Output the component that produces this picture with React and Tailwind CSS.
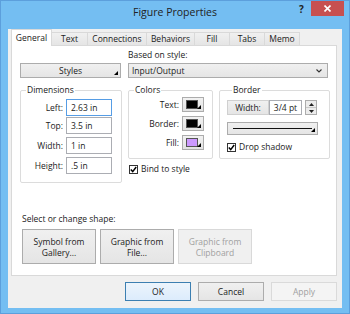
import React from 'react'

// small black corner triangle used on the drop-down style buttons
const Corner = () => (
  <svg className="absolute right-[2px] bottom-[2px]" width="4" height="4" viewBox="0 0 4 4">
    <polygon points="4,0 4,4 0,4" fill="#000" />
  </svg>
)

const Check = ({ label, className = '' }) => (
  <div className={`flex items-center gap-[3px] ${className}`}>
    <span className="w-[9px] h-[9px] border border-[#333] bg-white flex items-center justify-center">
      <svg width="7" height="7" viewBox="0 0 7 7">
        <path d="M0.8 3.6 L2.7 5.6 L6.2 1" stroke="#000" strokeWidth="1.5" fill="none" />
      </svg>
    </span>
    <span className="leading-[12px]">{label}</span>
  </div>
)

const Field = ({ label, value, focused }) => (
  <div className="flex items-center">
    <span className="w-[42px] text-right leading-[12px]">{label}</span>
    <div
      className={`ml-[3px] w-[46px] h-[17px] bg-white border flex items-center pl-[4px] leading-[12px] ${
        focused ? 'border-[#569de5]' : 'border-[#abadb3]'
      }`}
    >
      {value}
    </div>
  </div>
)

const Swatch = ({ label, color }) => (
  <div className="flex items-center">
    <span className="w-[50px] text-right leading-[12px]">{label}</span>
    <div className="relative ml-[3px] w-[22px] h-[15px] bg-linear-to-b from-[#f2f2f2] to-[#e2e2e2] border border-[#acacac]">
      <div className={`absolute left-[3px] top-[2px] w-[12px] h-[9px] border border-[#555] ${color}`} />
      <Corner />
    </div>
  </div>
)

const TABS = [
  ['Text', 'w-[36px]'],
  ['Connections', 'w-[59px]'],
  ['Behaviors', 'w-[48px]'],
  ['Fill', 'w-[35px]'],
  ['Tabs', 'w-[35px]'],
  ['Memo', 'w-[35px]'],
]

export default function App() {
  return (
    <div className="w-[350px] h-[314px] bg-[#74bef2] border border-[#5c9fdc] flex flex-col font-['Open_Sans',sans-serif] text-[8.5px] text-[#1b1b1b] overflow-hidden">
      {/* Title bar */}
      <div className="relative h-[28px] flex justify-center pt-[4px]">
        <span className="text-[10.5px] leading-[14px] text-[#222]">Figure Properties</span>
        <span className="absolute left-[298px] top-[1px] text-[10px] font-bold leading-[14px] text-[#222]">?</span>
        <div className="absolute right-[5px] top-[-1px] w-[33px] h-[16px] bg-[#c75050] flex items-center justify-center">
          <svg width="7" height="7" viewBox="0 0 7 7">
            <path d="M0.5 0.5 L6.5 6.5 M6.5 0.5 L0.5 6.5" stroke="#fff" strokeWidth="1.6" />
          </svg>
        </div>
      </div>

      {/* Client area */}
      <div className="mx-[7px] mb-[5px] flex-1 bg-[#f0f0f0] flex flex-col">
        {/* Tabs */}
        <div className="h-[16px] flex items-end pl-[3px]">
          <div className="relative z-10 -mb-px w-[41px] h-[17px] bg-white border-x border-t border-[#d9d9d9] flex justify-center pt-[2px] leading-[12px]">
            General
          </div>
          {TABS.map(([t, w]) => (
            <div
              key={t}
              className={`${w} h-[13px] bg-linear-to-b from-[#f0f0f0] to-[#e5e5e5] border-r border-t border-[#d9d9d9] flex justify-center leading-[12px]`}
            >
              {t}
            </div>
          ))}
        </div>

        {/* Panel */}
        <div className="ml-[3px] w-[326px] h-[231px] bg-white border border-[#d9d9d9] pl-[8px] pt-[3px] flex flex-col">
          <div className="flex">
            <div className="w-[101px]" />
            <span className="ml-[7px] leading-[12px]">Based on style:</span>
          </div>

          <div className="mt-[2px] flex gap-[7px]">
            <div className="relative w-[101px] h-[15px] bg-linear-to-b from-[#f0f0f0] to-[#e5e5e5] border border-[#acacac] flex items-center justify-center leading-[12px]">
              Styles
              <Corner />
            </div>
            <div className="w-[200px] h-[15px] bg-linear-to-b from-[#f0f0f0] to-[#e5e5e5] border border-[#acacac] flex items-center justify-between pl-[3px] pr-[5px] leading-[12px]">
              <span>Input/Output</span>
              <svg width="6" height="4" viewBox="0 0 6 4">
                <path d="M0.5 0.5 L3 3 L5.5 0.5" stroke="#333" strokeWidth="1.1" fill="none" />
              </svg>
            </div>
          </div>

          <div className="mt-[6px] flex">
            {/* Dimensions */}
            <fieldset className="w-[102px] border border-[#dcdcdc] rounded-[2px] pt-[3px] pb-[8px]">
              <legend className="ml-[5px] px-[1px] leading-[12px]">Dimensions</legend>
              <div className="flex flex-col">
                <Field label="Left:" value="2.63 in" focused />
                <div className="mt-[1px]"><Field label="Top:" value="3.5 in" /></div>
                <div className="mt-[3px]"><Field label="Width:" value="1 in" /></div>
                <div className="mt-[3px]"><Field label="Height:" value=".5 in" /></div>
              </div>
            </fieldset>

            <div className="ml-[6px] flex flex-col">
              <div className="flex items-stretch">
                {/* Colors */}
                <fieldset className="w-[85px] border border-[#dcdcdc] rounded-[2px] pt-[1px] pb-[6px]">
                  <legend className="ml-[5px] px-[1px] leading-[12px]">Colors</legend>
                  <div className="flex flex-col gap-[4px]">
                    <Swatch label="Text:" color="bg-black" />
                    <Swatch label="Border:" color="bg-black" />
                    <Swatch label="Fill:" color="bg-[#cc99ff]" />
                  </div>
                </fieldset>

                {/* Border */}
                <fieldset className="ml-[6px] w-[111px] border border-[#dcdcdc] rounded-[2px] pt-[4px] pl-[7px] pb-[5px]">
                  <legend className="ml-[5px] px-[1px] leading-[12px]">Border</legend>
                  <div className="flex items-center">
                    <div className="w-[42px] h-[15px] bg-linear-to-b from-[#f0f0f0] to-[#e5e5e5] border border-[#d0d0d0] flex items-center justify-center leading-[12px]">
                      Width:
                    </div>
                    <div className="w-[33px] h-[15px] bg-white border border-[#abadb3] flex items-center justify-center leading-[12px]">
                      3/4 pt
                    </div>
                    <div className="ml-[3px] w-[12px] h-[15px] flex flex-col border border-[#acacac] bg-[#ececec]">
                      <div className="flex-1 flex items-center justify-center border-b border-[#c8c8c8]">
                        <svg width="5" height="3" viewBox="0 0 5 3"><polygon points="0,3 5,3 2.5,0" fill="#222" /></svg>
                      </div>
                      <div className="flex-1 flex items-center justify-center">
                        <svg width="5" height="3" viewBox="0 0 5 3"><polygon points="0,0 5,0 2.5,3" fill="#222" /></svg>
                      </div>
                    </div>
                  </div>
                  <div className="relative mt-[7px] w-[91px] h-[13px] bg-linear-to-b from-[#f0f0f0] to-[#e5e5e5] border border-[#acacac] flex items-center px-[5px]">
                    <div className="w-full h-[1px] bg-[#111]" />
                    <Corner />
                  </div>
                  <Check label="Drop shadow" className="mt-[6px]" />
                </fieldset>
              </div>
              <Check label="Bind to style" className="mt-[4px] ml-[1px]" />
            </div>
          </div>

          <span className="mt-[30px] ml-[2px] leading-[12px]">Select or change shape:</span>

          <div className="mt-[4px] ml-[2px] flex gap-[4px]">
            <div className="w-[74px] h-[35px] bg-linear-to-b from-[#f0f0f0] to-[#e5e5e5] border border-[#acacac] flex flex-col items-center justify-center leading-[11px]">
              <span>Symbol from</span>
              <span>Gallery...</span>
            </div>
            <div className="w-[74px] h-[35px] bg-linear-to-b from-[#f0f0f0] to-[#e5e5e5] border border-[#acacac] flex flex-col items-center justify-center leading-[11px]">
              <span>Graphic from</span>
              <span>File...</span>
            </div>
            <div className="w-[74px] h-[35px] bg-[#f0f0f0] border border-[#d9d9d9] text-[#a0a0a0] flex flex-col items-center justify-center leading-[11px]">
              <span>Graphic from</span>
              <span>Clipboard</span>
            </div>
          </div>
        </div>

        {/* Dialog buttons */}
        <div className="mt-[6px] flex justify-end gap-[7px] pr-[5px]">
          <div className="w-[66px] h-[19px] bg-linear-to-b from-[#ecf4fc] to-[#dcecfc] border border-[#3c7fb1] flex items-center justify-center leading-[12px]">
            OK
          </div>
          <div className="w-[66px] h-[19px] bg-linear-to-b from-[#f0f0f0] to-[#e5e5e5] border border-[#acacac] flex items-center justify-center leading-[12px]">
            Cancel
          </div>
          <div className="w-[66px] h-[19px] bg-[#f4f4f4] border border-[#dadada] text-[#a0a0a0] flex items-center justify-center leading-[12px]">
            Apply
          </div>
        </div>
      </div>
    </div>
  )
}
